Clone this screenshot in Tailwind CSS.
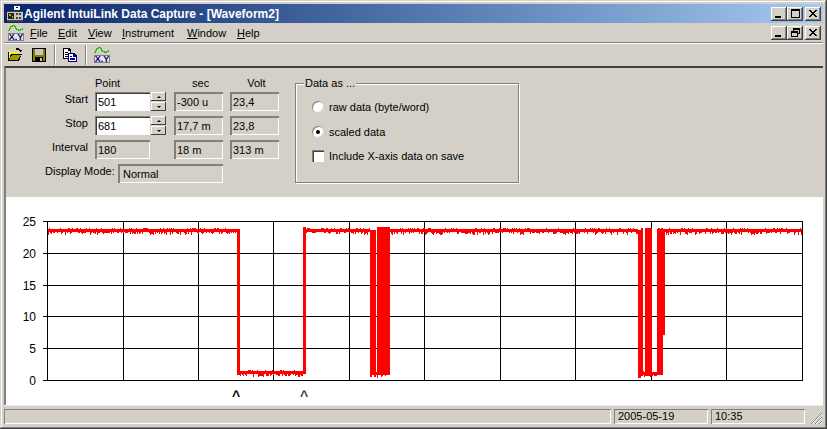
<!DOCTYPE html>
<html lang="en">
<head>
  <meta charset="UTF-8" />
  <title>Agilent IntuiLink Data Capture</title>
  <script src="https://cdn.jsdelivr.net/npm/@tailwindcss/browser@4"></script>
</head>
<body class="bg-[#d4d0c8] overflow-hidden">
  <div class="w-[827px] h-[429px] flex flex-col p-[4px] bg-[#d4d0c8] text-[11px] leading-[14px] text-black font-['Liberation_Sans',sans-serif] shadow-[inset_-1px_-1px_0_#404040,inset_1px_1px_0_#d4d0c8,inset_-2px_-2px_0_#808080,inset_2px_2px_0_#fff]">

    <!-- Title bar -->
    <div class="h-[19px] shrink-0 flex items-center pl-[3px] pr-[2px] bg-gradient-to-r from-[#0a246a] to-[#a6caf0]">
      <svg width="16" height="16" viewBox="0 0 16 16" shape-rendering="crispEdges" class="shrink-0">
        <rect x="7" y="0" width="6" height="4" fill="#fff"/>
        <rect x="9" y="1" width="2" height="1" fill="#000"/>
        <rect x="0" y="5" width="16" height="10" fill="#c8c8c0"/>
        <rect x="0" y="14" width="16" height="2" fill="#404040"/>
        <rect x="0" y="5" width="16" height="1" fill="#404040"/>
        <rect x="1" y="7" width="6" height="6" fill="#222"/>
        <rect x="2" y="8" width="2" height="2" fill="#b8b000"/>
        <rect x="5" y="10" width="1" height="2" fill="#b8b000"/>
        <rect x="9" y="7" width="2" height="2" fill="#404040"/>
        <rect x="12" y="7" width="2" height="2" fill="#404040"/>
        <rect x="9" y="11" width="2" height="2" fill="#404040"/>
        <rect x="12" y="11" width="2" height="2" fill="#404040"/>
      </svg>
      <span class="ml-[1px] text-white font-bold text-[12px] whitespace-nowrap">Agilent IntuiLink Data Capture - [Waveform2]</span>
      <div class="ml-auto flex">
        <button class="w-[16px] h-[14px] bg-[#d4d0c8] flex items-end justify-start pl-[4px] pb-[3px] shadow-[inset_-1px_-1px_0_#404040,inset_1px_1px_0_#fff,inset_-2px_-2px_0_#808080]"><span class="block w-[6px] h-[2px] bg-black"></span></button>
        <button class="w-[16px] h-[14px] bg-[#d4d0c8] flex items-center justify-center shadow-[inset_-1px_-1px_0_#404040,inset_1px_1px_0_#fff,inset_-2px_-2px_0_#808080]"><span class="block w-[9px] h-[9px] border border-black border-t-2"></span></button>
        <button class="ml-[2px] w-[16px] h-[14px] bg-[#d4d0c8] flex items-center justify-center shadow-[inset_-1px_-1px_0_#404040,inset_1px_1px_0_#fff,inset_-2px_-2px_0_#808080]">
          <svg width="8" height="7" viewBox="0 0 8 7" shape-rendering="crispEdges"><path d="M0 0h2v1h-2zM6 0h2v1h-2zM1 1h2v1h-2zM5 1h2v1h-2zM2 2h4v1h-4zM3 3h2v1h-2zM2 4h4v1h-4zM1 5h2v1h-2zM5 5h2v1h-2zM0 6h2v1h-2zM6 6h2v1h-2z"/></svg>
        </button>
      </div>
    </div>

    <!-- Menu bar -->
    <div class="h-[19px] shrink-0 flex items-center pl-[4px] pr-[2px]">
      <svg width="16" height="16" viewBox="0 0 16 16" shape-rendering="crispEdges" class="shrink-0">
        <path d="M0 5.5h1v-2h1v-2h2v-1h2v1h1v2h1v1h2v1h2v-1h2v-1h1" fill="none" stroke="#22c000" stroke-width="1"/>
        <rect x="0.5" y="8.5" width="15" height="7" fill="#e8e8e8" stroke="#808080"/>
        <text x="8" y="15" text-anchor="middle" font-size="9" font-weight="bold" fill="#000080" font-family="Liberation Sans">X.Y</text>
      </svg>
      <nav class="flex ml-[6px]">
        <a class="w-[28px]"><u>F</u>ile</a>
        <a class="w-[30px]"><u>E</u>dit</a>
        <a class="w-[34px]"><u>V</u>iew</a>
        <a class="w-[65px]"><u>I</u>nstrument</a>
        <a class="w-[50px]"><u>W</u>indow</a>
        <a><u>H</u>elp</a>
      </nav>
      <div class="ml-auto flex">
        <button class="w-[16px] h-[14px] bg-[#d4d0c8] flex items-end justify-start pl-[4px] pb-[3px] shadow-[inset_-1px_-1px_0_#404040,inset_1px_1px_0_#fff,inset_-2px_-2px_0_#808080]"><span class="block w-[6px] h-[2px] bg-black"></span></button>
        <button class="w-[16px] h-[14px] bg-[#d4d0c8] flex items-center justify-center shadow-[inset_-1px_-1px_0_#404040,inset_1px_1px_0_#fff,inset_-2px_-2px_0_#808080]">
          <svg width="9" height="9" viewBox="0 0 9 9" shape-rendering="crispEdges"><path d="M2 0h7v6h-2v-1h1v-3h-5v1h-1zM0 3h7v6h-7zM1 5v3h5v-3z" fill-rule="evenodd"/></svg>
        </button>
        <button class="ml-[2px] w-[16px] h-[14px] bg-[#d4d0c8] flex items-center justify-center shadow-[inset_-1px_-1px_0_#404040,inset_1px_1px_0_#fff,inset_-2px_-2px_0_#808080]">
          <svg width="8" height="7" viewBox="0 0 8 7" shape-rendering="crispEdges"><path d="M0 0h2v1h-2zM6 0h2v1h-2zM1 1h2v1h-2zM5 1h2v1h-2zM2 2h4v1h-4zM3 3h2v1h-2zM2 4h4v1h-4zM1 5h2v1h-2zM5 5h2v1h-2zM0 6h2v1h-2zM6 6h2v1h-2z"/></svg>
        </button>
      </div>
    </div>
    <div class="h-[2px] shrink-0 border-t border-[#808080] bg-white"></div>

    <!-- Toolbar -->
    <div class="h-[22px] shrink-0 flex items-center pl-[3px]">
      <svg width="16" height="16" viewBox="0 0 16 16" shape-rendering="crispEdges" class="shrink-0">
        <path d="M9 1h3v1h1v1h2v1h-1v1h-1v-1h-1v-1h-3z" fill="#000"/>
        <path d="M1 5h1v-1h3v1h6v2h-9z" fill="#f8f000"/>
        <path d="M1 14v-9h1v7l2-5h11l-3 7z" fill="#000"/>
        <path d="M2 13l3-5h9l-3 5z" fill="#a09800"/>
        <path d="M2 6h1v5h-1z" fill="#fff"/>
      </svg>
      <svg width="16" height="16" viewBox="0 0 16 16" shape-rendering="crispEdges" class="shrink-0 ml-[8px]">
        <rect x="1" y="1" width="14" height="14" fill="#000"/>
        <rect x="2" y="2" width="12" height="12" fill="#808000"/>
        <rect x="4" y="2" width="8" height="6" fill="#c8c8c0"/>
        <rect x="4" y="10" width="8" height="4" fill="#000"/>
        <rect x="9" y="11" width="2" height="3" fill="#c8c8c0"/>
      </svg>
      <span class="ml-[7px] w-[2px] h-[20px] border-l border-[#808080] bg-white"></span>
      <svg width="16" height="16" viewBox="0 0 16 16" shape-rendering="crispEdges" class="shrink-0 ml-[6px]">
        <path d="M1 1h6l2 2v3h-1v-2h-2v-2h-4v9h4v1h-5z" fill="#000"/>
        <path d="M2 2h4v2h2v2h-2v5h-4z" fill="#fff"/>
        <path d="M3 5h3v1h-3zM3 7h3v1h-3zM3 9h3v1h-3z" fill="#000"/>
        <path d="M6 6h6l3 3v6h-9z" fill="#000080"/>
        <path d="M7 7h4v3h3v4h-7z" fill="#fff"/>
        <path d="M8 9h2v1h-2zM8 11h5v1h-5zM8 12h5v1h-5z" fill="#000080"/>
      </svg>
      <span class="ml-[7px] w-[2px] h-[20px] border-l border-[#808080] bg-white"></span>
      <svg width="16" height="16" viewBox="0 0 16 16" shape-rendering="crispEdges" class="shrink-0 ml-[7px]">
        <path d="M0 5.5h1v-2h1v-2h2v-1h2v1h1v2h1v1h2v1h2v-1h2v-1h1" fill="none" stroke="#22c000" stroke-width="1"/>
        <rect x="0.5" y="8.5" width="15" height="7" fill="#e8e8e8" stroke="#808080"/>
        <text x="8" y="15" text-anchor="middle" font-size="9" font-weight="bold" fill="#000080" font-family="Liberation Sans">X.Y</text>
      </svg>
    </div>

    <!-- MDI child -->
    <div class="flex-1 min-h-0 flex flex-col border-t-2 border-l-2 border-t-[#404040] border-l-[#808080]">
      <!-- Controls -->
      <div class="h-[129px] shrink-0 flex pl-[38px] pt-[8px]">
        <div>
          <div class="h-[14px] flex mb-[2px]">
            <span class="ml-[51px]">Point</span>
            <span class="ml-[72px]">sec</span>
            <span class="ml-[38px]">Volt</span>
          </div>
          <div class="flex flex-col gap-[5px]">
            <div class="flex h-[19px]">
              <span class="w-[44px] text-right">Start</span>
              <div class="ml-[7px] w-[55px] pl-[3px] leading-[20px] bg-white shadow-[inset_1px_1px_0_#808080,inset_2px_2px_0_#404040,inset_-1px_-1px_0_#fff]">501</div>
              <div class="ml-[1px] w-[15px] flex flex-col">
                <button class="h-[9px] bg-[#d4d0c8] flex items-center justify-center shadow-[inset_-1px_-1px_0_#404040,inset_1px_1px_0_#fff]"><span class="border-x-[2px] border-x-transparent border-b-[2px] border-b-black"></span></button>
                <button class="mt-[1px] h-[9px] bg-[#d4d0c8] flex items-center justify-center shadow-[inset_-1px_-1px_0_#404040,inset_1px_1px_0_#fff]"><span class="border-x-[2px] border-x-transparent border-t-[2px] border-t-black"></span></button>
              </div>
              <div class="ml-[8px] w-[49px] pl-[3px] leading-[20px] shadow-[inset_2px_2px_0_#808080,inset_-1px_-1px_0_#fff]">-300 u</div>
              <div class="ml-[7px] w-[49px] pl-[3px] leading-[20px] shadow-[inset_2px_2px_0_#808080,inset_-1px_-1px_0_#fff]">23,4</div>
            </div>
            <div class="flex h-[19px]">
              <span class="w-[44px] text-right">Stop</span>
              <div class="ml-[7px] w-[55px] pl-[3px] leading-[20px] bg-white shadow-[inset_1px_1px_0_#808080,inset_2px_2px_0_#404040,inset_-1px_-1px_0_#fff]">681</div>
              <div class="ml-[1px] w-[15px] flex flex-col">
                <button class="h-[9px] bg-[#d4d0c8] flex items-center justify-center shadow-[inset_-1px_-1px_0_#404040,inset_1px_1px_0_#fff]"><span class="border-x-[2px] border-x-transparent border-b-[2px] border-b-black"></span></button>
                <button class="mt-[1px] h-[9px] bg-[#d4d0c8] flex items-center justify-center shadow-[inset_-1px_-1px_0_#404040,inset_1px_1px_0_#fff]"><span class="border-x-[2px] border-x-transparent border-t-[2px] border-t-black"></span></button>
              </div>
              <div class="ml-[8px] w-[49px] pl-[3px] leading-[20px] shadow-[inset_2px_2px_0_#808080,inset_-1px_-1px_0_#fff]">17,7 m</div>
              <div class="ml-[7px] w-[49px] pl-[3px] leading-[20px] shadow-[inset_2px_2px_0_#808080,inset_-1px_-1px_0_#fff]">23,8</div>
            </div>
            <div class="flex h-[19px]">
              <span class="w-[44px] text-right">Interval</span>
              <div class="ml-[7px] w-[55px] pl-[3px] leading-[20px] shadow-[inset_2px_2px_0_#808080,inset_-1px_-1px_0_#fff]">180</div>
              <div class="ml-[24px] w-[49px] pl-[3px] leading-[20px] shadow-[inset_2px_2px_0_#808080,inset_-1px_-1px_0_#fff]">18 m</div>
              <div class="ml-[7px] w-[49px] pl-[3px] leading-[20px] shadow-[inset_2px_2px_0_#808080,inset_-1px_-1px_0_#fff]">313 m</div>
            </div>
            <div class="flex h-[19px]">
              <span class="w-[74px] pl-[1px] whitespace-nowrap">Display Mode:</span>
              <div class="w-[105px] pl-[5px] leading-[20px] shadow-[inset_2px_2px_0_#808080,inset_-1px_-1px_0_#fff]">Normal</div>
            </div>
          </div>
        </div>

        <!-- Data as group -->
        <div class="relative ml-[16px] mt-[7px] w-[224px] h-[100px] border border-[#808080] shadow-[1px_1px_0_#fff,inset_1px_1px_0_#fff] pl-[16px] pt-[16px]">
          <span class="absolute left-[8px] -top-[8px] px-[1px] bg-[#d4d0c8]">Data as ...</span>
          <div class="flex items-center h-[14px]">
            <span class="w-[12px] h-[12px] rounded-full bg-white shadow-[inset_1px_1px_0_#808080,inset_-1px_-1px_0_#d4d0c8]"></span>
            <span class="ml-[5px]">raw data (byte/word)</span>
          </div>
          <div class="flex items-center h-[14px] mt-[11px]">
            <span class="w-[12px] h-[12px] rounded-full bg-white flex items-center justify-center shadow-[inset_1px_1px_0_#808080,inset_-1px_-1px_0_#d4d0c8]"><span class="w-[4px] h-[4px] rounded-full bg-black"></span></span>
            <span class="ml-[5px]">scaled data</span>
          </div>
          <div class="flex items-center h-[14px] mt-[10px]">
            <span class="w-[12px] h-[12px] bg-white shadow-[inset_1px_1px_0_#808080,inset_2px_2px_0_#404040,inset_-1px_-1px_0_#fff]"></span>
            <span class="ml-[5px] whitespace-nowrap">Include X-axis data on save</span>
          </div>
        </div>
      </div>

      <!-- Plot -->
      <div class="h-[208px] shrink-0 bg-white">
        <svg id="plot" width="816" height="208" viewBox="6 197 816 208" class="block" shape-rendering="crispEdges" font-family="Liberation Sans" font-size="12">
          <g stroke="#000" stroke-width="1">
            <path d="M47.5 221.5H802.5V380.5H47.5Z" fill="none"/>
            <path d="M47.5 253.5H802.5M47.5 285.5H802.5M47.5 316.5H802.5M47.5 348.5H802.5"/>
            <path d="M123.5 221.5V380.5M198.5 221.5V380.5M273.5 221.5V380.5M349.5 221.5V380.5M424.5 221.5V380.5M500.5 221.5V380.5M575.5 221.5V380.5M651.5 221.5V380.5M726.5 221.5V380.5"/>
            <path d="M43 221.5H47M43 253.5H47M43 285.5H47M43 316.5H47M43 348.5H47M43 380.5H47"/>
          </g>
          <g text-anchor="end" fill="#000" shape-rendering="auto">
            <text x="36" y="226">25</text>
            <text x="36" y="258">20</text>
            <text x="36" y="290">15</text>
            <text x="36" y="321">10</text>
            <text x="36" y="353">5</text>
            <text x="36" y="385">0</text>
          </g>
          <path id="trace" stroke="#ff0000" stroke-width="1" fill="none"/>
          <g fill="#ff0000">
            <rect x="237" y="229" width="3" height="146"/>
            <rect x="303" y="227" width="3" height="147"/>
            <rect x="370" y="230" width="6" height="145"/>
            <rect x="377" y="227" width="13" height="148"/>
            <rect x="638" y="230" width="3" height="148"/>
            <rect x="641" y="228" width="2" height="148"/>
            <rect x="645" y="228" width="5" height="148"/>
            <rect x="650" y="228" width="2" height="148"/>
            <rect x="657" y="229" width="3" height="146"/>
            <rect x="660" y="229" width="3" height="146"/>
            <rect x="663" y="229" width="2" height="106"/>
          </g>
          <text x="236" y="401" text-anchor="middle" font-weight="bold" font-size="14" fill="#000" shape-rendering="auto">^</text>
          <text x="304" y="401" text-anchor="middle" font-weight="bold" font-size="14" fill="#404040" shape-rendering="auto">^</text>
        </svg>
      </div>
    </div>

    <!-- Status bar -->
    <div class="h-[20px] shrink-0 flex items-end gap-[3px] pb-[1px] border-t border-[#ececec]">
      <div class="flex-1 h-[15px] shadow-[inset_1px_1px_0_#808080,inset_-1px_-1px_0_#fff]"></div>
      <div class="w-[94px] h-[15px] pl-[4px] leading-[15px] shadow-[inset_1px_1px_0_#808080,inset_-1px_-1px_0_#fff]">2005-05-19</div>
      <div class="w-[94px] h-[15px] pl-[4px] leading-[15px] shadow-[inset_1px_1px_0_#808080,inset_-1px_-1px_0_#fff]">10:35</div>
      <svg width="15" height="14" viewBox="0 0 15 14" class="shrink-0" shape-rendering="auto">
        <path d="M3 14L14 3M7 14L14 7M11 14L14 11" stroke="#808080"/>
        <path d="M4 14L14 4M8 14L14 8M12 14L14 12" stroke="#fff"/>
      </svg>
    </div>
  </div>

  <script>
    // noisy flat parts of the trace, one column per pixel
    let seed = 7;
    function rnd() {
      seed = (seed * 16807) % 2147483647;
      return seed / 2147483647;
    }
    const flats = [[48, 238, 228], [238, 304, 370], [304, 370, 228], [370, 390, 371], [390, 638, 228], [638, 658, 371], [658, 802, 228]];
    let d = '';
    flats.forEach(([from, to, top]) => {
      for (let x = from; x < to; x++) {
        const r = rnd();
        const up = r > 0.8 ? 1 : 0;
        const down = r < 0.06 ? 3 : r < 0.25 ? 2 : r < 0.55 ? 1 : 0;
        d += 'M' + (x + 0.5) + ' ' + (top + 1 - up) + 'V' + (top + 4 + down);
      }
    });
    document.getElementById('trace').setAttribute('d', d);
  </script>
</body>
</html>
